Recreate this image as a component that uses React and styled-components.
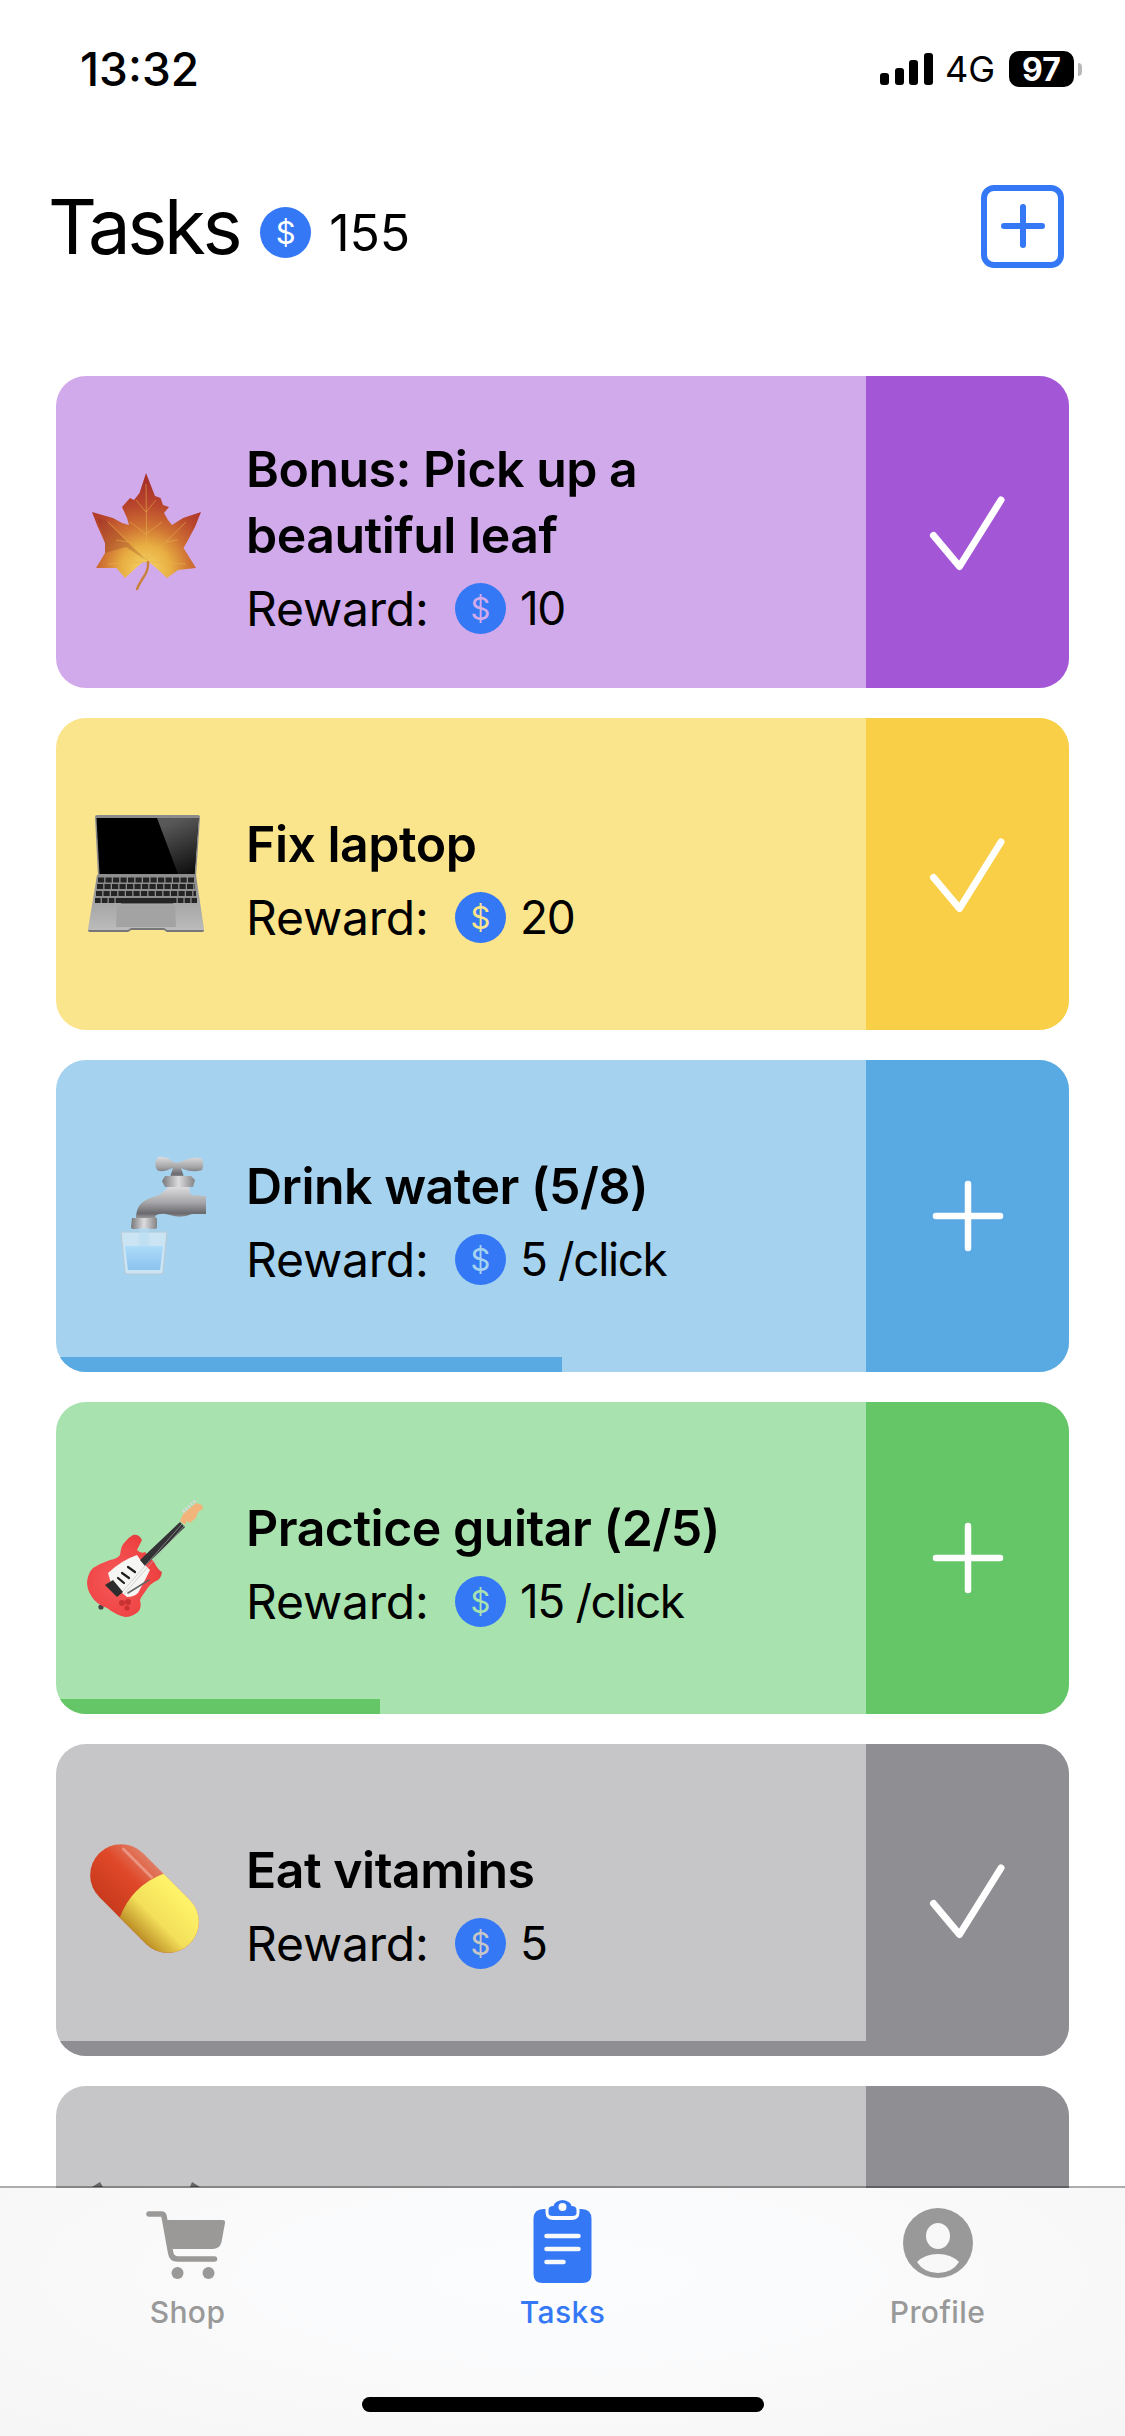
import React from "react";
import styled, { createGlobalStyle } from "styled-components";

const GlobalStyle = createGlobalStyle`
  html, body {
    margin: 0;
    padding: 0;
    background: #fff;
  }
  body {
    font-family: Inter, "Liberation Sans", sans-serif;
    color: #000;
  }
`;

const BLUE = "#3478f6";

const Page = styled.div`
  display: flex;
  flex-direction: column;
  width: 1125px;
  height: 2436px;
  overflow: hidden;
  background: #fff;
`;

// status bar
const StatusBar = styled.div`
  display: flex;
  flex: 0 0 138px;
  align-items: center;
  justify-content: space-between;
  padding: 0 43px 0 80px;
  box-sizing: border-box;
`;
const Clock = styled.span`
  font-size: 46px;
  font-weight: 500;
`;
const StatusRight = styled.div`
  display: flex;
  align-items: center;
`;
const Signal = styled.div`
  display: flex;
  align-items: flex-end;
  gap: 5.5px;
  height: 32px;
  margin-right: 12px;
`;
const SignalBar = styled.span`
  width: 9px;
  height: ${(p) => p.$h}px;
  border-radius: 3px;
  background: #000;
`;
const Network = styled.span`
  font-size: 36px;
  font-weight: 400;
  margin-right: 14px;
`;
const Battery = styled.span`
  display: flex;
  align-items: center;
  justify-content: center;
  width: 65px;
  height: 36px;
  border-radius: 10px;
  background: #000;
  color: #fff;
  font-size: 32px;
  font-weight: 700;
`;
const BatteryCap = styled.span`
  width: 4px;
  height: 13px;
  margin-left: 4px;
  border-radius: 0 4px 4px 0;
  background: #b9b9b9;
`;

// header
const Header = styled.div`
  display: flex;
  flex: 0 0 176px;
  align-items: center;
  padding: 0 61px 0 48px;
`;
const Title = styled.h1`
  margin: 0;
  font-size: 76px;
  font-weight: 400;
  letter-spacing: -3.4px;
`;
const Balance = styled.div`
  display: flex;
  align-items: center;
  margin: 13px 0 0 21px;
  font-size: 50px;
  font-weight: 400;
`;
const AddButton = styled.button`
  display: flex;
  align-items: center;
  justify-content: center;
  width: 83px;
  height: 83px;
  margin-left: auto;
  padding: 0;
  border: 6px solid ${BLUE};
  border-radius: 13px;
  background: none;
  box-sizing: border-box;
`;

const Coin = styled.span`
  display: inline-flex;
  flex: 0 0 auto;
  align-items: center;
  justify-content: center;
  width: 51px;
  height: 51px;
  margin-right: ${(p) => p.$gap}px;
  border-radius: 50%;
  background: ${BLUE};
  color: ${(p) => p.$tint};
  font-size: 31px;
  font-weight: 400;
  letter-spacing: 0;
`;

// tasks
const List = styled.div`
  display: flex;
  flex: 1 1 0;
  flex-direction: column;
  gap: 30px;
  min-height: 0;
  padding: 62px 56px 0;
  overflow: hidden;
`;
const Card = styled.div`
  display: flex;
  flex: 0 0 312px;
  border-radius: 30px;
  overflow: hidden;
  background: ${(p) => p.$light};
`;
const CardMain = styled.div`
  position: relative;
  display: flex;
  flex: 1 1 0;
  align-items: center;
  gap: 40px;
  padding-left: 30px;
`;
const Emoji = styled.svg`
  flex: 0 0 120px;
  width: 120px;
  height: 120px;
  overflow: visible;
`;
const CardText = styled.div`
  padding-top: 20px;
`;
const CardTitle = styled.div`
  width: 480px;
  font-size: 50px;
  font-weight: 600;
  line-height: 66px;
  letter-spacing: -0.5px;
`;
const Reward = styled.div`
  display: flex;
  align-items: center;
  height: 80px;
  font-size: 48px;
  font-weight: 400;
  letter-spacing: -0.2px;
`;
const RewardLabel = styled.span`
  width: 209px;
`;
const RewardValue = styled.span`
  font-size: 46px;
  letter-spacing: -1.4px;
`;
const Progress = styled.div`
  position: absolute;
  left: 0;
  bottom: 0;
  height: 15px;
  background: ${(p) => p.$dark};
`;
const Action = styled.div`
  display: flex;
  flex: 0 0 203px;
  align-items: center;
  justify-content: center;
  background: ${(p) => p.$dark};
`;

// tab bar
const TabBar = styled.div`
  position: relative;
  display: flex;
  flex: 0 0 250px;
  flex-direction: column;
  margin-top: -2px;
  box-sizing: border-box;
  border-top: 2px solid rgba(0, 0, 0, 0.32);
  background: radial-gradient(ellipse at 50% 35%, #fcfdfe 0%, #f8f8f9 70%, #f6f6f6 100%);
  background-clip: padding-box;
`;
const Tabs = styled.div`
  display: grid;
  grid-template-columns: repeat(3, 1fr);
  padding-top: 1px;
`;
const Tab = styled.div`
  display: flex;
  flex-direction: column;
  align-items: center;
  color: ${(p) => (p.$active ? BLUE : "#999")};
  font-size: 30px;
  font-weight: 500;
  line-height: 36px;
  letter-spacing: 0.4px;
`;
const TabIcon = styled.svg`
  width: 120px;
  height: 100px;
  margin-bottom: 5px;
`;
const HomeIndicator = styled.div`
  width: 402px;
  height: 15px;
  margin: auto auto 24px;
  border-radius: 8px;
  background: #000;
`;

const Check = () => (
  <svg width="100" height="100" viewBox="0 0 100 100" fill="none">
    <path d="M15.5 53.5 L41.5 84.5 L83 18" stroke="#fff" strokeWidth="7" strokeLinecap="round" strokeLinejoin="round" />
  </svg>
);

const Plus = () => (
  <svg width="100" height="100" viewBox="0 0 100 100" fill="none">
    <path d="M50 18 V82 M18 50 H82" stroke="#fff" strokeWidth="6.5" strokeLinecap="round" />
  </svg>
);

const Leaf = () => (
  <Emoji viewBox="0 0 120 120">
    <defs>
      <radialGradient id="leafFill" gradientUnits="userSpaceOnUse" cx="60" cy="98" r="88">
        <stop offset="0" stopColor="#f6d767" />
        <stop offset="0.28" stopColor="#e8ae42" />
        <stop offset="0.5" stopColor="#cf7233" />
        <stop offset="0.75" stopColor="#b8452c" />
        <stop offset="1" stopColor="#a8302a" />
      </radialGradient>
    </defs>
    <path
      d="M60 1 L69 24 L74.5 26 L77 33 L83 35 L78 41 L82 48 L86 53 L97 46 L115 40 L109 55 L101 70 L97.5 76 L110 96 L92 98 L81 106 L69 95 L63 90 L57 90 L51 95 L39 106 L30.5 96 L10 96 L19 81 L19 71 L11 53 L6 40 L27 46 L36 51 L43 53 L41 46 L36 35 L44 26 L48 28 L53.5 21 Z"
      fill="url(#leafFill)"
    />
    <path d="M60 88 L19 48 L11 46 L19 71 L19 81 L40 75 Z" fill="#8a3324" opacity="0.28" />
    <path
      d="M60 12 L61 90 M61 88 L22 50 M61 88 L100 50 M60 90 L22 92 M62 90 L100 92 M60 40 L50 28 M60 40 L70 28 M60 62 L44 50 M60 62 L76 50 M42 70 L30 68 M80 70 L92 68"
      stroke="#e8b14e"
      strokeWidth="0.7"
      fill="none"
      opacity="0.8"
    />
    <path d="M62 90 C63 102 55 106 51 117" stroke="#c9803a" strokeWidth="2.4" fill="none" strokeLinecap="round" />
  </Emoji>
);

const Laptop = () => (
  <Emoji viewBox="0 0 120 120">
    <defs>
      <linearGradient id="lapBase" x1="0" y1="0" x2="0" y2="1">
        <stop offset="0" stopColor="#8f8f8f" />
        <stop offset="1" stopColor="#bdbdbd" />
      </linearGradient>
      <linearGradient id="lapGlare" x1="0.6" y1="0" x2="0.9" y2="1">
        <stop offset="0" stopColor="#585858" />
        <stop offset="1" stopColor="#0c0c0c" />
      </linearGradient>
    </defs>
    <path d="M9 3 Q9 1 11 1 H112 Q114 1 114 3 L110 62 H12 Z" fill="#8b8b8b" />
    <path d="M10.5 4 H112.5 L108.5 60 H13.5 Z" fill="#000" />
    <path d="M71 4 H112.5 L108.5 60 H92 Z" fill="url(#lapGlare)" />
    <path d="M11 61 H110 L118 115 Q118 118 115 118 H81 L78 116 H45 L42 118 H5 Q2 118 2 115 Z" fill="url(#lapBase)" />
    <path d="M11 61 H110 L111 89 H9 Z" fill="#8e8e8e" />
    <g fill="none" stroke="#242424" strokeWidth="5.2">
      <path d="M12 66 H108" strokeDasharray="6.2 1.3" />
      <path d="M11 72.5 H109" strokeDasharray="6.2 1.3" />
      <path d="M10 79.5 H110" strokeDasharray="6.2 1.3" />
      <path d="M9 86.5 H111" strokeDasharray="5.6 1.3" />
    </g>
    <rect x="35" y="84" width="52" height="5.4" fill="#242424" />
    <path d="M31 91 H89 L90 113 H30 Z" fill="#a3a3a3" />
    <path d="M2 116 H42 L45 114 H78 L81 116 H118 V117 Q118 118 115 118 H81 L78 116 H45 L42 118 H5 Q2 118 2 116 Z" fill="#777" />
  </Emoji>
);

const Faucet = () => (
  <Emoji viewBox="0 0 120 120">
    <defs>
      <linearGradient id="metalV" x1="0" y1="0" x2="0" y2="1">
        <stop offset="0" stopColor="#dcdcde" />
        <stop offset="0.5" stopColor="#a6a6a9" />
        <stop offset="0.85" stopColor="#69696e" />
        <stop offset="1" stopColor="#99999c" />
      </linearGradient>
      <linearGradient id="metalH" x1="0" y1="0" x2="1" y2="0">
        <stop offset="0" stopColor="#77777a" />
        <stop offset="0.5" stopColor="#dcdcde" />
        <stop offset="1" stopColor="#838386" />
      </linearGradient>
      <linearGradient id="glassWater" x1="0" y1="0" x2="0" y2="1">
        <stop offset="0" stopColor="#aedcf9" />
        <stop offset="1" stopColor="#8cc2ef" />
      </linearGradient>
    </defs>
    <path d="M72 1 Q80 0 86 5 L90 7 L97 5 Q106 0 115 2 Q119 8 116 14 Q107 17 97 13 L95 12 L98 21 H84 L87 12 L84 13 Q76 17 71 14 Q67 8 72 1 Z" fill="url(#metalV)" />
    <path d="M79 20 H105 L109 24 L107 31 H79 L76 25 Z" fill="url(#metalH)" />
    <path d="M82 31 H103 L105 39 L120 40 V58 H106 Q95 63 84 59 Q74 56 69 60 L70 62 H50 Q50 47 64 42 Q76 39 82 31 Z" fill="url(#metalV)" />
    <path d="M46 62 H71 V71 Q71 73 69 73 H47 Q45 73 45 71 Z" fill="url(#metalH)" />
    <path d="M35 76 H81 L77 116 Q77 118 75 118 H41 Q39 118 39 116 Z" fill="#d4e9f6" opacity="0.8" stroke="#bcc7ce" strokeWidth="1" />
    <path d="M39 90 H77 L74 114 H42 Z" fill="url(#glassWater)" />
    <path d="M53 72 H63 V90 H53 Z" fill="#b7dcf2" opacity="0.6" />
  </Emoji>
);

const Guitar = () => (
  <Emoji viewBox="0 0 120 120">
    <defs>
      <radialGradient id="guitarBody" cx="0.4" cy="0.55" r="0.7">
        <stop offset="0" stopColor="#f6595a" />
        <stop offset="0.75" stopColor="#ef4242" />
        <stop offset="1" stopColor="#d93a3a" />
      </radialGradient>
    </defs>
    <circle cx="15" cy="109" r="2.6" fill="#444" />
    <path
      d="M47 37 Q53 36 56 42 Q53 48 51 52 Q55 56 59 54 L68 64 Q72 72 76 74 Q75 80 72 82 Q64 85 59 94 Q55 99 54 102 Q56 110 52 114 Q46 119 39 119 Q30 117 21 110 Q10 106 6 99 Q1 92 1 84 Q2 75 7 70 Q15 65 24 62 Q31 61 34 57 Q35 47 39 44 Q43 39 47 37 Z"
      fill="url(#guitarBody)"
    />
    <path d="M51 57 Q36 62 22 75 L25 85 L35 94 L41 99 Q48 99 52 95 L59 82 L64 72 L56 64 Z" fill="#f5f5f3" />
    <path d="M54 62 L94 24 L99 29 L59 68 Z" fill="#333336" />
    <path d="M36 94 L96 26 M38 96 L98 28" stroke="#b9b9b9" strokeWidth="0.6" fill="none" />
    <path d="M94 23 L97 16 L110 5 L116 7 L117 11 L112 14 L110 20 L104 25 L101 23 L99 27 Z" fill="#f2b47b" />
    <path d="M97 14 L110 2" stroke="#d9d9d9" strokeWidth="3" strokeDasharray="2 1.6" fill="none" />
    <g stroke="#1d1d1f" strokeWidth="2.2" strokeLinecap="round">
      <path d="M42 69 L49 74" />
      <path d="M36 75 L43 80" />
      <path d="M32 80 L38 85" />
    </g>
    <path d="M19 87 L27 82 L37 94 L31 99 Z" fill="#2c2c2e" />
    <path d="M42 95 L63 82" stroke="#666" strokeWidth="1.6" strokeLinecap="round" />
    <circle cx="36" cy="105" r="3" fill="#c93232" />
    <circle cx="42" cy="104" r="3" fill="#c93232" />
    <circle cx="41" cy="110" r="2.6" fill="#c93232" />
  </Emoji>
);

const Pill = () => (
  <Emoji viewBox="0 0 120 120">
    <defs>
      <linearGradient id="pillRed" x1="0" y1="0" x2="0" y2="1">
        <stop offset="0" stopColor="#e07c62" />
        <stop offset="0.4" stopColor="#e0492a" />
        <stop offset="1" stopColor="#c93a1c" />
      </linearGradient>
      <linearGradient id="pillYellow" x1="0" y1="0" x2="0" y2="1">
        <stop offset="0" stopColor="#fff46a" />
        <stop offset="0.6" stopColor="#f3df5a" />
        <stop offset="1" stopColor="#bd8f26" />
      </linearGradient>
    </defs>
    <g transform="translate(58.5 58.5) rotate(45)">
      <rect x="-64" y="-31" width="128" height="62" rx="31" fill="url(#pillRed)" />
      <path d="M-4 -31 H33 A31 31 0 0 1 33 31 H-4 Q-18 0 -4 -31 Z" fill="url(#pillYellow)" />
      <path d="M-50 -20 H-10" stroke="#fff" strokeWidth="3" opacity="0.3" strokeLinecap="round" />
    </g>
  </Emoji>
);

// only the very top of this one shows above the tab bar
const HiddenEmoji = () => (
  <Emoji viewBox="0 0 120 120">
    <path d="M6 5 L14 0 L17 5 Z M104 5 L106 0 L114 5 Z" fill="#666" />
  </Emoji>
);

const tasks = [
  { id: "leaf", icon: <Leaf />, title: "Bonus: Pick up a beautiful leaf", reward: "10", light: "#d1aaeb", dark: "#a357d6", action: "check" },
  { id: "laptop", icon: <Laptop />, title: "Fix laptop", reward: "20", light: "#fbe58c", dark: "#f8cf47", action: "check" },
  { id: "water", icon: <Faucet />, title: "Drink water (5/8)", reward: "5 /click", light: "#a5d3ef", dark: "#59a9e2", action: "plus", progress: 5 / 8 },
  { id: "guitar", icon: <Guitar />, title: "Practice guitar (2/5)", reward: "15 /click", light: "#a8e2af", dark: "#64c666", action: "plus", progress: 2 / 5 },
  { id: "vitamins", icon: <Pill />, title: "Eat vitamins", reward: "5", light: "#c6c6c8", dark: "#8e8e93", action: "check", progress: 1 },
];

function TaskCard({ task }) {
  return (
    <Card $light={task.light}>
      <CardMain>
        {task.icon}
        <CardText>
          <CardTitle>{task.title}</CardTitle>
          <Reward>
            <RewardLabel>Reward:</RewardLabel>
            <Coin $tint={task.light} $gap={14}>$</Coin>
            <RewardValue>{task.reward}</RewardValue>
          </Reward>
        </CardText>
        {task.progress ? (
          <Progress $dark={task.dark} style={{ width: `${task.progress * 100}%` }} />
        ) : null}
      </CardMain>
      <Action $dark={task.dark}>{task.action === "plus" ? <Plus /> : <Check />}</Action>
    </Card>
  );
}

export default function App() {
  return (
    <Page>
      <GlobalStyle />
      <StatusBar>
        <Clock>13:32</Clock>
        <StatusRight>
          <Signal>
            <SignalBar $h={12} />
            <SignalBar $h={17} />
            <SignalBar $h={25} />
            <SignalBar $h={32} />
          </Signal>
          <Network>4G</Network>
          <Battery>97</Battery>
          <BatteryCap />
        </StatusRight>
      </StatusBar>

      <Header>
        <Title>Tasks</Title>
        <Balance>
          <Coin $tint="#fff" $gap={18}>$</Coin>
          155
        </Balance>
        <AddButton aria-label="Add task">
          <svg width="44" height="44" viewBox="0 0 44 44" fill="none">
            <path d="M22 3 V41 M3 22 H41" stroke={BLUE} strokeWidth="6" strokeLinecap="round" />
          </svg>
        </AddButton>
      </Header>

      <List>
        {tasks.map((task) => (
          <TaskCard key={task.id} task={task} />
        ))}
        <Card $light="#c6c6c8">
          <CardMain>
            <HiddenEmoji />
          </CardMain>
          <Action $dark="#8e8e93" />
        </Card>
      </List>

      <TabBar>
        <Tabs>
          <Tab>
            <TabIcon viewBox="7.5 -1 120 100" fill="none">
              <path d="M28.5 24 H41 Q43 24 43.5 26 L50 62 Q51 69 57 69 H94" stroke="#9a9998" strokeWidth="5.5" strokeLinecap="round" strokeLinejoin="round" />
              <path d="M45 30 H102 Q105 30 104.5 33 L101 52 Q99.5 59 92 59 H52 Z" fill="#9a9998" />
              <circle cx="57" cy="83" r="6" fill="#9a9998" />
              <circle cx="88" cy="83" r="6" fill="#9a9998" />
            </TabIcon>
            Shop
          </Tab>
          <Tab $active>
            <TabIcon viewBox="2.5 -1 120 100" fill="none">
              <path d="M43 19 H45 V22 Q45 30 53 30 H71 Q79 30 79 22 V19 H81 Q91 19 91 29 V84 Q91 93 82 93 H42 Q33 93 33 84 V29 Q33 19 43 19 Z" fill={BLUE} />
              <path d="M48 20 Q48 16 53 16 Q54 11 62 10 Q70 11 71 16 Q76 16 76 20 V23 Q76 26 72 26 H52 Q48 26 48 23 Z" fill={BLUE} />
              <circle cx="62" cy="17" r="4" fill="#f8f9fb" />
              <path d="M46 46 H78 M46 59 H78 M46 72 H63" stroke="#f8f9fb" strokeWidth="4.5" strokeLinecap="round" />
            </TabIcon>
            Tasks
          </Tab>
          <Tab>
            <TabIcon viewBox="0 0 120 100" fill="none">
              <circle cx="60" cy="54" r="35" fill="#999" />
              <ellipse cx="60" cy="47" rx="12" ry="13" fill="#f8f8f8" />
              <path d="M39 73 Q47 65 60 65 Q73 65 81 73 Q74 84 60 84 Q46 84 39 73 Z" fill="#f8f8f8" />
            </TabIcon>
            Profile
          </Tab>
        </Tabs>
        <HomeIndicator />
      </TabBar>
    </Page>
  );
}
